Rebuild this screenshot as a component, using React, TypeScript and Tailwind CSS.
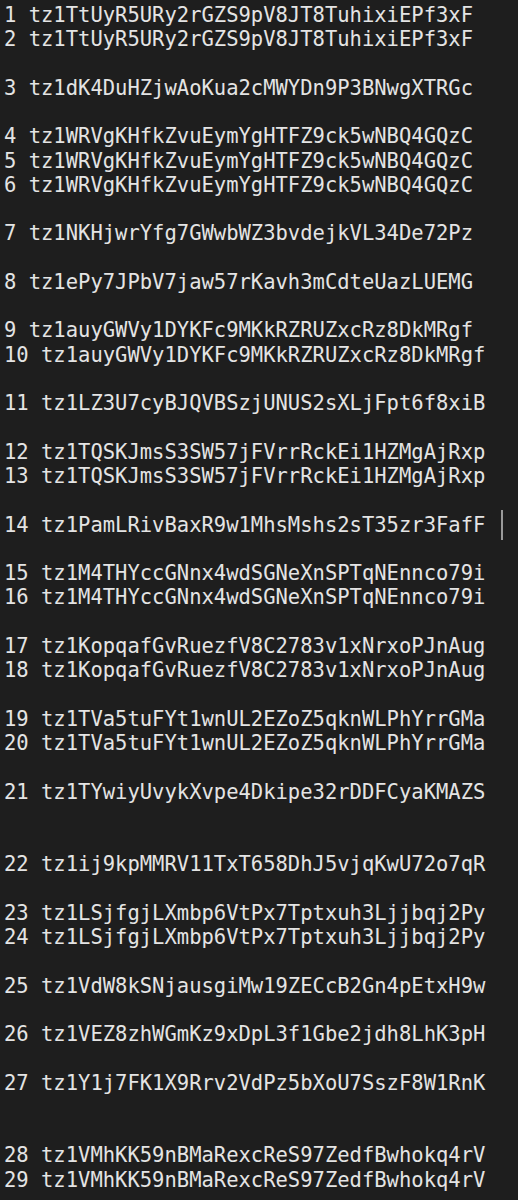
import React from 'react';

const rows: (string | null)[] = [
  '1 tz1TtUyR5URy2rGZS9pV8JT8TuhixiEPf3xF',
  '2 tz1TtUyR5URy2rGZS9pV8JT8TuhixiEPf3xF',
  null,
  '3 tz1dK4DuHZjwAoKua2cMWYDn9P3BNwgXTRGc',
  null,
  '4 tz1WRVgKHfkZvuEymYgHTFZ9ck5wNBQ4GQzC',
  '5 tz1WRVgKHfkZvuEymYgHTFZ9ck5wNBQ4GQzC',
  '6 tz1WRVgKHfkZvuEymYgHTFZ9ck5wNBQ4GQzC',
  null,
  '7 tz1NKHjwrYfg7GWwbWZ3bvdejkVL34De72Pz',
  null,
  '8 tz1ePy7JPbV7jaw57rKavh3mCdteUazLUEMG',
  null,
  '9 tz1auyGWVy1DYKFc9MKkRZRUZxcRz8DkMRgf',
  '10 tz1auyGWVy1DYKFc9MKkRZRUZxcRz8DkMRgf',
  null,
  '11 tz1LZ3U7cyBJQVBSzjUNUS2sXLjFpt6f8xiB',
  null,
  '12 tz1TQSKJmsS3SW57jFVrrRckEi1HZMgAjRxp',
  '13 tz1TQSKJmsS3SW57jFVrrRckEi1HZMgAjRxp',
  null,
  'CURSOR',
  null,
  '15 tz1M4THYccGNnx4wdSGNeXnSPTqNEnnco79i',
  '16 tz1M4THYccGNnx4wdSGNeXnSPTqNEnnco79i',
  null,
  '17 tz1KopqafGvRuezfV8C2783v1xNrxoPJnAug',
  '18 tz1KopqafGvRuezfV8C2783v1xNrxoPJnAug',
  null,
  '19 tz1TVa5tuFYt1wnUL2EZoZ5qknWLPhYrrGMa',
  '20 tz1TVa5tuFYt1wnUL2EZoZ5qknWLPhYrrGMa',
  null,
  '21 tz1TYwiyUvykXvpe4Dkipe32rDDFCyaKMAZS',
  null,
  null,
  '22 tz1ij9kpMMRV11TxT658DhJ5vjqKwU72o7qR',
  null,
  '23 tz1LSjfgjLXmbp6VtPx7Tptxuh3Ljjbqj2Py',
  '24 tz1LSjfgjLXmbp6VtPx7Tptxuh3Ljjbqj2Py',
  null,
  '25 tz1VdW8kSNjausgiMw19ZECcB2Gn4pEtxH9w',
  null,
  '26 tz1VEZ8zhWGmKz9xDpL3f1Gbe2jdh8LhK3pH',
  null,
  '27 tz1Y1j7FK1X9Rrv2VdPz5bXoU7SszF8W1RnK',
  null,
  null,
  '28 tz1VMhKK59nBMaRexcReS97ZedfBwhokq4rV',
  '29 tz1VMhKK59nBMaRexcReS97ZedfBwhokq4rV',
];

const App: React.FC = () => {
  return (
    <div className="min-h-screen w-full bg-[#1e1e1e] overflow-hidden">
      <div
        className="pl-[4px] pt-[3px] text-[20.5px] leading-[24.27px] text-[#e4e4e4] whitespace-pre"
        style={{ fontFamily: '"DejaVu Sans Mono", monospace' }}
      >
        {rows.map((r, i) =>
          r === null ? (
            <div key={i} className="h-[24.27px]" />
          ) : r === 'CURSOR' ? (
            <div key={i} className="flex h-[24.27px] items-center">
              <span>14 tz1PamLRivBaxR9w1MhsMshs2sT35zr3FafF </span>
              <span className="ml-[3px] -my-[3px] inline-block h-[30px] w-[2px] bg-[#9a9a9a]" />
            </div>
          ) : (
            <div key={i} className="h-[24.27px]">{r}</div>
          )
        )}
      </div>
    </div>
  );
};

export default App;
